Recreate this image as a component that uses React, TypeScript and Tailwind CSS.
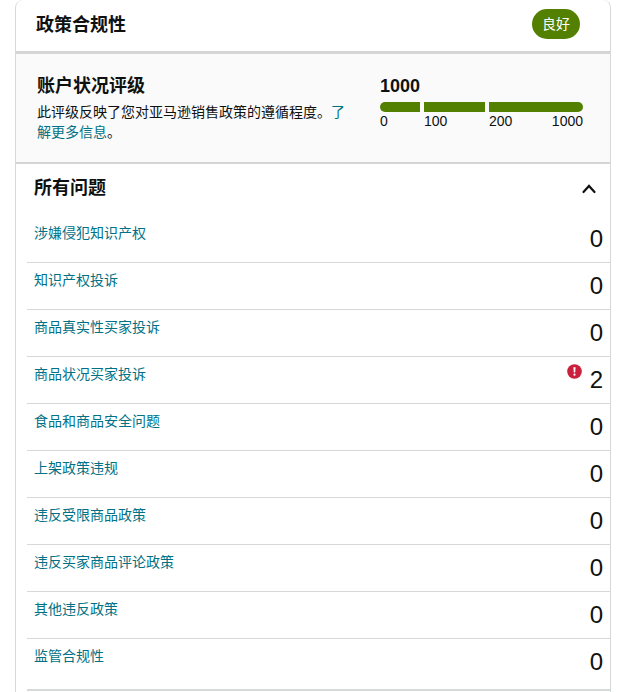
import React, { useState } from 'react';

const issues = [
  { label: '涉嫌侵犯知识产权', count: 0 },
  { label: '知识产权投诉', count: 0 },
  { label: '商品真实性买家投诉', count: 0 },
  { label: '商品状况买家投诉', count: 2 },
  { label: '食品和商品安全问题', count: 0 },
  { label: '上架政策违规', count: 0 },
  { label: '违反受限商品政策', count: 0 },
  { label: '违反买家商品评论政策', count: 0 },
  { label: '其他违反政策', count: 0 },
  { label: '监管合规性', count: 0 },
];

function AlertIcon() {
  return (
    <svg width="15" height="15" viewBox="0 0 15 15" role="img" aria-label="!">
      <circle cx="7.5" cy="7.5" r="7.3" fill="#cc1f3b" />
      <path d="M6.4 3.2h2.2l-.4 5.3H6.8z" fill="#fff" />
      <circle cx="7.5" cy="10.7" r="1.1" fill="#fff" />
    </svg>
  );
}

function RatingBar() {
  return (
    <div className="w-[203px] shrink-0">
      <p className="text-lg leading-6 font-bold">1000</p>
      <div className="mt-1 flex h-2.5 gap-1">
        <span className="w-10 rounded-l-full bg-[#538000]" />
        <span className="w-[61px] bg-[#538000]" />
        <span className="flex-1 rounded-r-full bg-[#538000]" />
      </div>
      <div className="flex gap-1 text-sm leading-[18px]">
        <span className="w-10">0</span>
        <span className="w-[61px]">100</span>
        <span className="flex flex-1 justify-between">
          <span>200</span>
          <span>1000</span>
        </span>
      </div>
    </div>
  );
}

export default function App() {
  const [open, setOpen] = useState(true);

  return (
    <main className="bg-white pr-[14px] pl-[15px] font-['Liberation_Sans','Noto_Sans_CJK_SC',sans-serif] text-[#0f1111]">
      <section className="min-h-screen rounded-t-lg border-x border-[#d5d9d9]">
        <header className="flex items-start justify-between border-b-3 border-[#d5d5d5] pt-[9px] pr-[30px] pb-[10px] pl-5">
          <h1 className="text-lg leading-8 font-bold">政策合规性</h1>
          <span className="rounded-full bg-[#538000] px-[10px] text-sm leading-[30px] text-white">
            良好
          </span>
        </header>

        <div className="flex justify-between gap-8 border-b-2 border-[#d5d5d5] bg-[#fafafa] pt-5 pr-[27px] pb-5 pl-[21px]">
          <div className="min-w-0 flex-1">
            <h2 className="text-lg leading-6 font-bold">账户状况评级</h2>
            <p className="mt-1 text-sm leading-5">
              此评级反映了您对亚马逊销售政策的遵循程度。
              <a href="#" className="text-[#007185]">了解更多信息</a>。
            </p>
          </div>
          <RatingBar />
        </div>

        <div className="pl-[11px]">
          <h2>
            <button
              type="button"
              aria-expanded={open}
              onClick={() => setOpen(!open)}
              className="flex w-full items-center justify-between pt-2 pr-[13px] pb-3 pl-[7px] text-lg leading-8 font-bold"
            >
              所有问题
              <svg
                width="16"
                height="12"
                viewBox="0 0 16 12"
                fill="none"
                stroke="#0f1111"
                strokeWidth="2.2"
                strokeLinecap="round"
                className={open ? '' : 'rotate-180'}
                aria-hidden="true"
              >
                <path d="m2.5 10 5.5-6 5.5 6" />
              </svg>
            </button>
          </h2>
          {open && (
            <ul className="border-b-2 border-[#d5d9d9] pb-1">
              {issues.map((issue) => (
                <li
                  key={issue.label}
                  className="flex items-start justify-between border-b border-[#d5d9d9] p-[7px] last:border-b-0"
                >
                  <a href="#" className="text-sm leading-5 text-[#007185]">
                    {issue.label}
                  </a>
                  <span className="flex items-start gap-2">
                    {issue.count > 0 && <AlertIcon />}
                    <span className="text-2xl leading-8">{issue.count}</span>
                  </span>
                </li>
              ))}
            </ul>
          )}
        </div>
      </section>
    </main>
  );
}
